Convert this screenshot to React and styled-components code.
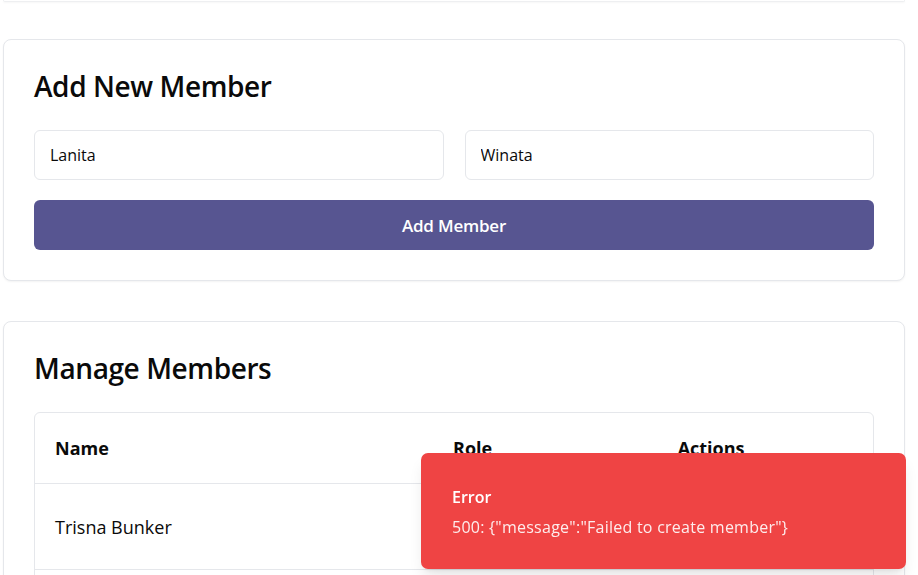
import React, { useState } from "react";
import styled, { createGlobalStyle } from "styled-components";

const GlobalStyle = createGlobalStyle`
  body {
    margin: 0;
    background: #ffffff;
    font-family: "Open Sans", "Noto Sans", sans-serif;
    color: #0a0a0a;
  }
`;

const Page = styled.div`
  display: flex;
  flex-direction: column;
  gap: 40px;
  padding: 0 13px 0 3px;
`;

const Card = styled.section`
  background: #fff;
  border: 1px solid #e5e7eb;
  border-radius: 8px;
  box-shadow: 0 1px 2px rgba(0, 0, 0, 0.05);
  padding: 30px;
`;

// bottom edge of the card scrolled just above the viewport
const CardTail = styled.div`
  height: 1px;
  margin-bottom: -3px;
  border: 1px solid #eeeff1;
  border-top: none;
  border-radius: 0 0 8px 8px;
  box-shadow: 0 1px 2px rgba(0, 0, 0, 0.04);
`;

const Heading = styled.h2`
  margin: 0 0 ${({ $gap }) => $gap}px;
  font-size: 28px;
  font-weight: 600;
  line-height: 32px;
  letter-spacing: -0.4px;
`;

const FieldRow = styled.div`
  display: grid;
  grid-template-columns: 1fr 1fr;
  gap: 21px;
`;

const Input = styled.input`
  box-sizing: border-box;
  height: 50px;
  width: 100%;
  padding: 0 15px;
  border: 1px solid #e5e7eb;
  border-radius: 6px;
  font-family: inherit;
  font-size: 16px;
  color: #0a0a0a;
  outline: none;
`;

const Button = styled.button`
  display: block;
  width: 100%;
  height: 50px;
  margin-top: 20px;
  border: none;
  border-radius: 6px;
  background: #575591;
  color: #ffffff;
  font-family: inherit;
  font-size: 17px;
  font-weight: 600;
  letter-spacing: -0.2px;
  cursor: pointer;
`;

const TableWrap = styled.div`
  border: 1px solid #e5e7eb;
  border-radius: 6px;
  overflow: hidden;
`;

const Table = styled.table`
  width: 100%;
  border-collapse: collapse;
`;

const Th = styled.th`
  text-align: left;
  font-size: 18px;
  font-weight: 700;
  height: 70px;
  padding: 0 20px;
  width: ${({ $w }) => $w};
  border-bottom: 1px solid #e5e7eb;
`;

const Td = styled.td`
  height: 85px;
  padding: 0 20px;
  font-size: 18px;
  border-bottom: 1px solid #e5e7eb;
`;

const Toast = styled.div`
  position: fixed;
  right: 12px;
  bottom: 6px;
  width: 485px;
  box-sizing: border-box;
  padding: 33px 31px 31px;
  background: #ef4444;
  border-radius: 7px;
  box-shadow: 0 10px 15px -3px rgba(0, 0, 0, 0.1), 0 4px 6px -4px rgba(0, 0, 0, 0.1);
  color: #ffffff;
`;

const ToastTitle = styled.div`
  font-size: 16px;
  font-weight: 600;
  line-height: 22px;
`;

const ToastText = styled.div`
  margin-top: 8px;
  font-size: 16px;
  line-height: 22px;
  letter-spacing: 0.25px;
  opacity: 0.9;
`;

const members = [
  { name: "Trisna Bunker", role: "", id: 1 },
  { name: "", role: "", id: 2 },
];

export default function App() {
  const [first, setFirst] = useState("Lanita");
  const [last, setLast] = useState("Winata");

  return (
    <>
      <GlobalStyle />
      <Page>
        <CardTail />
        <Card>
          <Heading $gap={28}>Add New Member</Heading>
          <FieldRow>
            <Input value={first} onChange={(e) => setFirst(e.target.value)} />
            <Input value={last} onChange={(e) => setLast(e.target.value)} />
          </FieldRow>
          <Button>Add Member</Button>
        </Card>
        <Card>
          <Heading $gap={28}>Manage Members</Heading>
          <TableWrap>
            <Table>
              <thead>
                <tr>
                  <Th $w="47.5%">Name</Th>
                  <Th $w="26.8%">Role</Th>
                  <Th>Actions</Th>
                </tr>
              </thead>
              <tbody>
                {members.map((m) => (
                  <tr key={m.id}>
                    <Td>{m.name}</Td>
                    <Td>{m.role}</Td>
                    <Td />
                  </tr>
                ))}
              </tbody>
            </Table>
          </TableWrap>
        </Card>
      </Page>
      <Toast>
        <ToastTitle>Error</ToastTitle>
        <ToastText>500: {'{"message":"Failed to create member"}'}</ToastText>
      </Toast>
    </>
  );
}
